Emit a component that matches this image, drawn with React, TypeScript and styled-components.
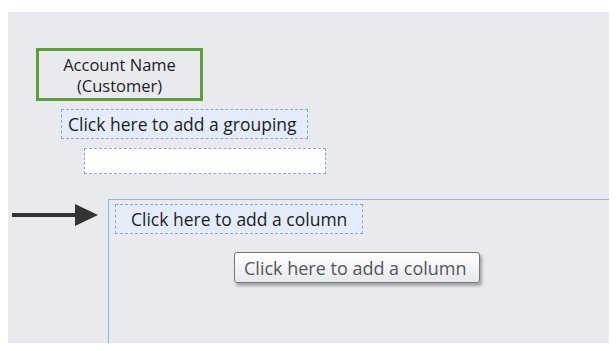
import React from "react";
import styled, { createGlobalStyle } from "styled-components";

const GlobalStyle = createGlobalStyle`
  html, body {
    margin: 0;
    padding: 0;
    background: #ffffff;
  }
  body {
    font-family: "Open Sans", "DejaVu Sans", sans-serif;
  }
`;

const Canvas = styled.div`
  display: flex;
  flex-direction: column;
  box-sizing: border-box;
  width: 601px;
  height: 331px;
  margin: 12px 0 0 8px;
  padding: 36px 0 0 4px;
  background: #e9eaee;
`;

const AccountBox = styled.div`
  box-sizing: border-box;
  width: 167px;
  height: 53px;
  margin-left: 24px;
  border: 3px solid #5e9e3a;
  display: flex;
  flex-direction: column;
  align-items: center;
  justify-content: center;
  font-size: 16.5px;
  line-height: 21px;
  color: #1e1e1e;
`;

const DashedBox = styled.div<{ $fill: string; $indent: number; $w: number; $h: number; $gap: number; $pad?: number }>`
  box-sizing: border-box;
  width: ${({ $w }) => $w}px;
  height: ${({ $h }) => $h}px;
  margin-top: ${({ $gap }) => $gap}px;
  margin-left: ${({ $indent }) => $indent}px;
  padding-left: ${({ $pad = 6 }) => $pad}px;
  border: 1px dashed #8ea6d6;
  background: ${({ $fill }) => $fill};
  display: flex;
  align-items: center;
  font-size: 17.5px;
  color: #1e1e1e;
  white-space: nowrap;
`;

const Row = styled.div`
  display: flex;
  flex: 1;
  margin-top: 25px;
`;

const ArrowSlot = styled.div`
  width: 96px;
  flex-shrink: 0;
  padding-top: 5px;
`;

const ColumnArea = styled.div`
  flex: 1;
  display: flex;
  flex-direction: column;
  align-items: flex-start;
  border-top: 1.5px solid #9bb1de;
  border-left: 1.5px solid #9bb1de;
  padding: 2px 0 0 6px;
`;

const Tooltip = styled.div`
  box-sizing: border-box;
  width: 246px;
  height: 31px;
  margin: 18px 0 0 119px;
  padding-left: 9px;
  display: flex;
  align-items: center;
  border: 1px solid #767676;
  border-radius: 3px;
  background: linear-gradient(#ffffff, #e6e8ee);
  box-shadow: 2px 3px 3px rgba(0, 0, 0, 0.3);
  font-size: 18px;
  color: #575757;
  white-space: nowrap;
`;

const Arrow = () => (
  <svg width="88" height="24" viewBox="0 0 88 24">
    <line x1="0" y1="11" x2="66" y2="11" stroke="#333333" strokeWidth="4" />
    <polygon points="63,0 86,11 63,22" fill="#333333" />
  </svg>
);

export default function App() {
  return (
    <>
      <GlobalStyle />
      <Canvas>
        <AccountBox>
          <span>Account Name</span>
          <span>(Customer)</span>
        </AccountBox>
        <DashedBox $fill="#e4ecfa" $indent={49} $w={247} $h={30} $gap={8}>
          Click here to add a grouping
        </DashedBox>
        <DashedBox $fill="#ffffff" $indent={72} $w={242} $h={26} $gap={9} />
        <Row>
          <ArrowSlot>
            <Arrow />
          </ArrowSlot>
          <ColumnArea>
            <DashedBox $fill="#e4ecfa" $indent={0} $w={248} $h={30} $gap={2} $pad={15}>
              Click here to add a column
            </DashedBox>
            <Tooltip>Click here to add a column</Tooltip>
          </ColumnArea>
        </Row>
      </Canvas>
    </>
  );
}
